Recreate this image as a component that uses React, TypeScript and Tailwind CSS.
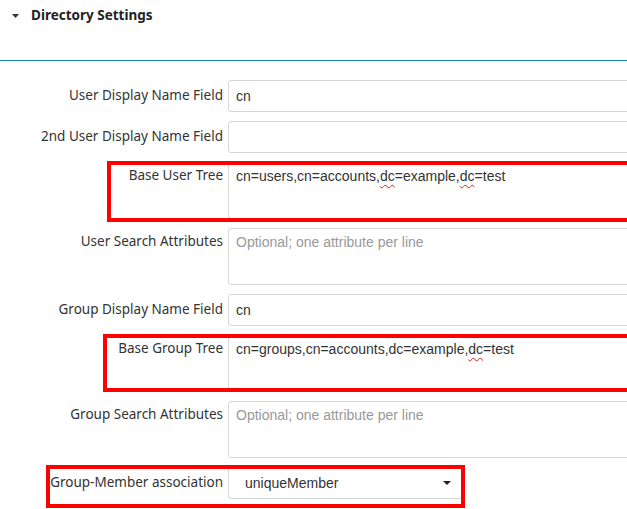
import React from 'react';

const labelFont = { fontFamily: '"Noto Sans", "Open Sans", sans-serif' };

const Squig = ({ children }: { children: React.ReactNode }) => (
  <span className="underline decoration-wavy decoration-[#e02020] decoration-1 underline-offset-[3px]">
    {children}
  </span>
);

type Row = {
  label: string;
  kind: 'input' | 'area' | 'select';
  value?: React.ReactNode;
  placeholder?: string;
};

const rows: Row[] = [
  { label: 'User Display Name Field', kind: 'input', value: 'cn' },
  { label: '2nd User Display Name Field', kind: 'input', value: '' },
  {
    label: 'Base User Tree',
    kind: 'area',
    value: (
      <>
        cn=users,cn=accounts,<Squig>dc</Squig>=example,<Squig>dc</Squig>=test
      </>
    ),
  },
  { label: 'User Search Attributes', kind: 'area', placeholder: 'Optional; one attribute per line' },
  { label: 'Group Display Name Field', kind: 'input', value: 'cn' },
  {
    label: 'Base Group Tree',
    kind: 'area',
    value: (
      <>
        cn=groups,cn=accounts,dc=example,<Squig>dc</Squig>=test
      </>
    ),
  },
  { label: 'Group Search Attributes', kind: 'area', placeholder: 'Optional; one attribute per line' },
  { label: 'Group-Member association', kind: 'select', value: 'uniqueMember' },
];

const Field = ({ row }: { row: Row }) => {
  const inputFont = { fontFamily: '"Liberation Sans", Arial, sans-serif' };
  if (row.kind === 'select') {
    return (
      <div
        className="w-[234px] h-8 border border-[#d6d6d6] rounded-[3px] bg-white flex items-center justify-between pl-[16px] pr-[10px] text-[14px] text-[#333]"
        style={inputFont}
      >
        <span>{row.value}</span>
        <svg width="8" height="4" viewBox="0 0 8 4">
          <path d="M0 0 L8 0 L4 4 Z" fill="#222" />
        </svg>
      </div>
    );
  }
  if (row.kind === 'area') {
    return (
      <div
        className="w-[420px] h-[57px] border border-[#d6d6d6] rounded-[3px] bg-white pl-[7px] pt-[5px] text-[14px] leading-4 text-[#333] whitespace-nowrap"
        style={inputFont}
      >
        {row.value ?? <span className="text-[#999]">{row.placeholder}</span>}
      </div>
    );
  }
  return (
    <div
      className="w-[420px] h-8 border border-[#d6d6d6] rounded-[3px] bg-white pl-[7px] flex items-center text-[14px] text-[#333]"
      style={inputFont}
    >
      {row.value}
    </div>
  );
};

export default function App() {
  return (
    <div className="relative w-[627px] h-[509px] overflow-hidden bg-white">
      {/* section header */}
      <div className="h-[61px] border-b border-[#1586c8] flex items-start pt-[6px]">
        <div className="flex items-center h-[19px]">
          <svg width="7" height="4" viewBox="0 0 7 4" className="ml-[12px] mt-[1px]">
            <path d="M0 0 L7 0 L3.5 4 Z" fill="#333" />
          </svg>
          <span className="ml-[12px] text-[13.5px] font-bold text-[#222]" style={labelFont}>
            Directory Settings
          </span>
        </div>
      </div>

      {/* form */}
      <div className="flex flex-col gap-[9px] pt-[19px]">
        {rows.map((row) => (
          <div key={row.label} className="flex">
            <div
              className={`w-[223px] shrink-0 text-right text-[13.5px] leading-4 text-[#333] ${
                row.kind === 'area' ? 'pt-[5px]' : 'pt-[7px]'
              }`}
              style={labelFont}
            >
              {row.label}
            </div>
            <div className="ml-[5px] shrink-0">
              <Field row={row} />
            </div>
          </div>
        ))}
      </div>

      {/* red annotation boxes */}
      <div className="absolute left-[107px] top-[161px] w-[524px] h-[61px] border-4 border-[#ff0000]" />
      <div className="absolute left-[103px] top-[334px] w-[528px] h-[58px] border-4 border-[#ff0000]" />
      <div className="absolute left-[46px] top-[465px] w-[419px] h-[43px] border-4 border-[#ff0000]" />
    </div>
  );
}
